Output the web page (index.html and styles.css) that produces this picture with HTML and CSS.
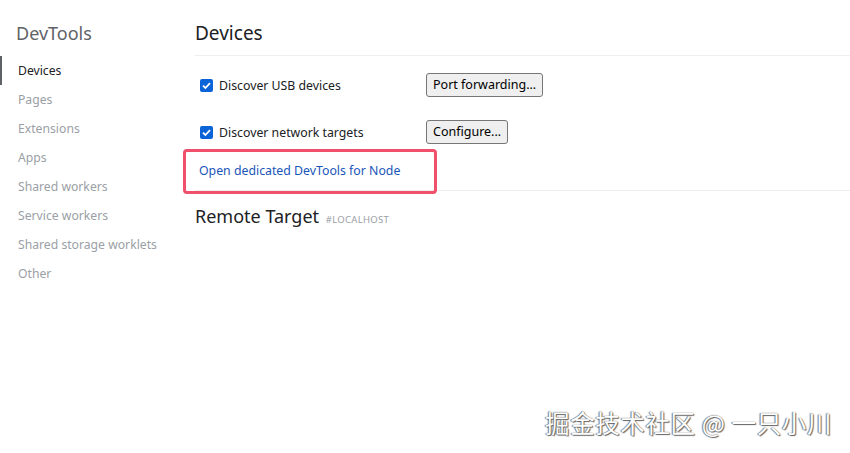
FILE: index.html
```html
<!DOCTYPE html>
<html>
<head>
<meta charset="utf-8">
<link rel="stylesheet" href="styles.css">
</head>
<body>
<div class="app">
  <nav class="sidebar">
    <div class="brand">DevTools</div>
    <ul class="menu">
      <li class="item active">Devices</li>
      <li class="item">Pages</li>
      <li class="item">Extensions</li>
      <li class="item">Apps</li>
      <li class="item">Shared workers</li>
      <li class="item">Service workers</li>
      <li class="item">Shared storage worklets</li>
      <li class="item">Other</li>
    </ul>
  </nav>
  <main class="content">
    <h1 class="title">Devices</h1>
    <div class="options">
      <div class="row">
        <label class="check"><span class="box"><svg viewBox="0 0 13 13" width="13" height="13"><path d="M3 6.6 L5.4 9 L10 4.2" fill="none" stroke="#fff" stroke-width="1.8"/></svg></span>Discover USB devices</label>
        <button class="btn">Port forwarding...</button>
      </div>
      <div class="row">
        <label class="check"><span class="box"><svg viewBox="0 0 13 13" width="13" height="13"><path d="M3 6.6 L5.4 9 L10 4.2" fill="none" stroke="#fff" stroke-width="1.8"/></svg></span>Discover network targets</label>
        <button class="btn">Configure...</button>
      </div>
    </div>
    <div class="node-row">
      <div class="highlight"></div>
      <a class="link">Open dedicated DevTools for Node</a>
    </div>
    <h2 class="subtitle">Remote Target <span class="host">#LOCALHOST</span></h2>
  </main>
</div>
<div class="watermark">掘金技术社区 @ 一只小川</div>
</body>
</html>
```
FILE: styles.css
```css
html, body {
  margin: 0;
  padding: 0;
  background: #fff;
  width: 850px;
  height: 453px;
  overflow: hidden;
  font-family: "Noto Sans", "Open Sans", sans-serif;
  position: relative;
}
.app {
  display: flex;
}
.sidebar {
  width: 195px;
  flex: none;
}
.brand {
  font-size: 18px;
  color: #5f6368;
  padding: 20px 0 0 16px;
  height: 27px;
  line-height: 27px;
}
.menu {
  list-style: none;
  margin: 9px 0 0;
  padding: 0;
}
.item {
  font-size: 12.2px;
  color: #9aa0a6;
  height: 29px;
  line-height: 29px;
  padding-left: 18px;
}
.item.active {
  color: #202124;
  border-left: 2px solid #5f6368;
  padding-left: 16px;
}
.content {
  flex: 1;
}
.title {
  margin: 0;
  font-weight: normal;
  font-size: 19px;
  color: #202124;
  padding-top: 20px;
  height: 27px;
  line-height: 27px;
  padding-bottom: 8px;
  border-bottom: 1px solid #eeeeee;
}
.options {
  padding-top: 17px;
}
.row {
  display: flex;
  align-items: center;
  height: 24px;
  margin-bottom: 23px;
}
.check {
  display: flex;
  align-items: center;
  width: 226px;
  padding-left: 5px;
  font-size: 12.3px;
  color: #202124;
}
.box {
  width: 13px;
  height: 13px;
  border-radius: 2px;
  background: #0b63d8;
  margin-right: 6px;
  display: flex;
}
.btn {
  font-family: "Noto Sans", "Open Sans", sans-serif;
  font-size: 12.5px;
  color: #000;
  background: #efefef;
  border: 1px solid #767676;
  border-radius: 3px;
  height: 24px;
  padding: 0 6px;
  line-height: 20px;
}
.node-row {
  position: relative;
  height: 40px;
  margin-top: -17px;
  border-bottom: 1px solid #eeeeee;
}
.link {
  display: block;
  padding-left: 4px;
  padding-top: 1px;
  line-height: 40px;
  font-size: 12.3px;
  color: #1a55b8;
  position: relative;
}
.highlight {
  position: absolute;
  left: -12px;
  top: -1px;
  width: 248px;
  height: 39px;
  border: 3px solid #f0506b;
  border-radius: 4px;
}
.subtitle {
  margin: 0;
  font-weight: normal;
  font-size: 18px;
  color: #202124;
  padding-top: 12px;
  line-height: 26px;
}
.host {
  font-size: 9.5px;
  color: #9aa0a6;
  letter-spacing: 0.3px;
  margin-left: 2px;
}
.watermark {
  position: absolute;
  right: 18px;
  top: 405px;
  font-family: "Noto Sans CJK SC", sans-serif;
  font-size: 24.5px;
  color: #fff;
  text-shadow: 0 0 1px #555, 1px 1px 1px #666, -1px 0 1px #888;
  letter-spacing: 0.6px;
}
```
